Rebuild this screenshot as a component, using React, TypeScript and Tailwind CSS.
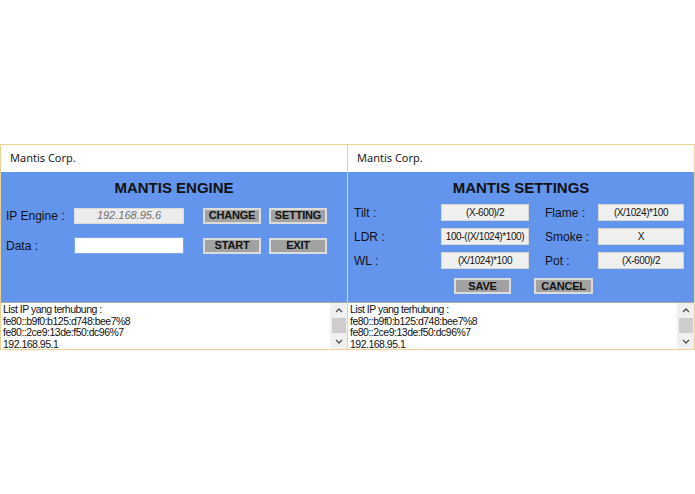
import React from "react";

function Btn({ label, w }: { label: string; w: string }) {
  return (
    <div
      className={`${w} h-[16px] bg-[#a2a2a2] border-2 border-[#dcdcdc] flex items-center justify-center text-[11px] font-bold leading-none tracking-[-0.2px] text-[#111]`}
    >
      {label}
    </div>
  );
}

function Box({ text, w }: { text: string; w: string }) {
  return (
    <div
      className={`${w} h-[17px] bg-[#f0f0f0] border border-[#d6d6d6] flex items-center justify-center text-[10px] leading-none tracking-[-0.4px] text-[#111] whitespace-nowrap`}
    >
      {text}
    </div>
  );
}

function Chevron({ up }: { up?: boolean }) {
  return (
    <svg width="8" height="5" viewBox="0 0 8 5">
      <path
        d={up ? "M1 4 L4 1 L7 4" : "M1 1 L4 4 L7 1"}
        fill="none"
        stroke="#505050"
        strokeWidth="1.3"
      />
    </svg>
  );
}

function Log() {
  return (
    <div className="h-[47px] bg-white border-t border-[#a8a8a8] flex">
      <div className="flex-1 pl-[2px] pt-[1px] text-[10.5px] leading-[11.5px] tracking-[-0.5px] text-[#111] overflow-hidden">
        <div>List IP yang terhubung :</div>
        <div>fe80::b9f0:b125:d748:bee7%8</div>
        <div>fe80::2ce9:13de:f50:dc96%7</div>
        <div>192.168.95.1</div>
      </div>
      <div className="w-[17px] bg-[#f0f0f0] flex flex-col items-center">
        <div className="h-[15px] flex items-center justify-center">
          <Chevron up />
        </div>
        <div className="w-[14px] h-[15px] bg-[#cdcdcd]" />
        <div className="flex-1 flex items-center justify-center">
          <Chevron />
        </div>
      </div>
    </div>
  );
}

function TitleBar() {
  return (
    <div className="h-[27px] bg-white flex items-center pl-[9px] font-['Noto_Sans',sans-serif] text-[11px] text-[#1a1a1a]">
      Mantis Corp.
    </div>
  );
}

export default function App() {
  return (
    <div className="w-[695px] h-[494px] bg-white font-['Liberation_Sans',Arial,sans-serif]">
      <div className="h-[144px]" />
      <div className="flex">
        {/* Left window */}
        <div className="w-[348px] border border-[#efd293] flex flex-col">
          <TitleBar />
          <div className="h-[130px] bg-[#6495ed] flex flex-col pt-[7px]">
            <div className="h-[18px] flex items-center justify-center text-[15px] font-bold text-[#111]">
              MANTIS ENGINE
            </div>
            <div className="mt-[10px] h-[17px] flex items-center">
              <div className="w-[73px] pl-[5px] text-[12px] text-[#111]">IP Engine :</div>
              <div className="w-[110px] h-[16px] bg-[#ececec] border border-[#dadada] flex items-center justify-center text-[11px] italic text-[#6e6e6e]">
                192.168.95.6
              </div>
              <div className="ml-[19px]">
                <Btn label="CHANGE" w="w-[58px]" />
              </div>
              <div className="ml-[8px]">
                <Btn label="SETTING" w="w-[58px]" />
              </div>
            </div>
            <div className="mt-[13px] h-[17px] flex items-center">
              <div className="w-[73px] pl-[5px] text-[12px] text-[#111]">Data :</div>
              <div className="w-[110px] h-[17px] bg-white border border-[#7aa7e8]" />
              <div className="ml-[19px]">
                <Btn label="START" w="w-[58px]" />
              </div>
              <div className="ml-[8px]">
                <Btn label="EXIT" w="w-[58px]" />
              </div>
            </div>
          </div>
          <Log />
        </div>

        {/* Right window */}
        <div className="w-[347px] border-t border-b border-r border-[#efd293] flex flex-col">
          <TitleBar />
          <div className="h-[130px] bg-[#6495ed] flex flex-col pt-[7px]">
            <div className="h-[18px] flex items-center justify-center text-[15px] font-bold text-[#111]">
              MANTIS SETTINGS
            </div>
            <div className="mt-[7px] flex flex-col gap-[7px]">
              {[
                ["Tilt :", "(X-600)/2", "Flame :", "(X/1024)*100"],
                ["LDR :", "100-((X/1024)*100)", "Smoke :", "X"],
                ["WL :", "(X/1024)*100", "Pot :", "(X-600)/2"],
              ].map((r, i) => (
                <div key={i} className="h-[17px] flex items-center">
                  <div className="w-[93px] pl-[6px] text-[12px] text-[#111]">{r[0]}</div>
                  <Box text={r[1]} w="w-[88px]" />
                  <div className="w-[69px] pl-[16px] text-[12px] text-[#111]">{r[2]}</div>
                  <Box text={r[3]} w="w-[86px]" />
                </div>
              ))}
            </div>
            <div className="mt-[9px] flex">
              <div className="ml-[106px]">
                <Btn label="SAVE" w="w-[57px]" />
              </div>
              <div className="ml-[23px]">
                <Btn label="CANCEL" w="w-[59px]" />
              </div>
            </div>
          </div>
          <Log />
        </div>
      </div>
    </div>
  );
}
